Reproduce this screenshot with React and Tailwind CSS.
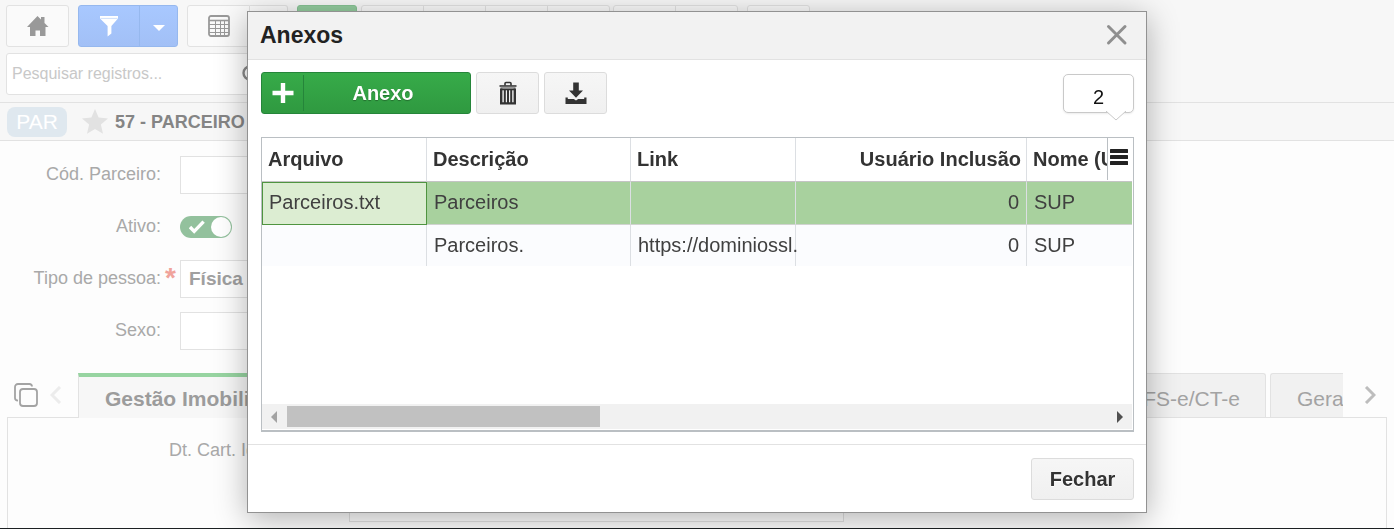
import React, { useState } from 'react';

const HomeIcon = () => (
  <svg viewBox="0 0 22 22" className="w-[22px] h-[22px]" fill="#999">
    <path d="M0 12 L10.5 1 L14 4.6 V2 H17.5 V8 L21.5 12 H18.5 V21 H13 V15.5 H8.5 V21 H3 V12 Z" />
  </svg>
);

const FunnelIcon = () => (
  <svg viewBox="0 0 20 22" className="w-5 h-[22px]" fill="#fff">
    <path d="M1 1 H19 V3.4 L12.4 11 V18.5 L8.6 21.5 V11 L1 3.4 Z" />
    <path d="M1.5 3.4 H18.5" stroke="#cfe0fb" strokeWidth="1" />
  </svg>
);

const GridIcon = () => (
  <svg viewBox="0 0 22 22" className="w-[22px] h-[22px]" fill="none" stroke="#999">
    <rect x="1" y="1" width="20" height="20" rx="2" strokeWidth="1.8" />
    <path d="M1 5.5 H21" strokeWidth="1.6" />
    <path d="M1 9.5 H21 M1 13.5 H21 M1 17.5 H21 M7.5 5.5 V21 M12.5 5.5 V21 M16.5 5.5 V21" strokeWidth="1" />
  </svg>
);

const SearchIcon = () => (
  <svg viewBox="0 0 20 20" className="w-5 h-5" fill="none" stroke="#8a8a8a" strokeWidth="2.4">
    <circle cx="8" cy="9" r="6.5" />
    <path d="M13 14 L18 19" />
  </svg>
);

const StarIcon = () => (
  <svg viewBox="0 0 26 25" className="w-[26px] h-[25px]" fill="#e2e2e2">
    <path d="M13 0 L16.6 8.6 L26 9.4 L18.9 15.5 L21 24.8 L13 19.9 L5 24.8 L7.1 15.5 L0 9.4 L9.4 8.6 Z" />
  </svg>
);

const CopyIcon = () => (
  <svg viewBox="0 0 24 24" className="w-6 h-6" fill="none" stroke="#a3a3a3" strokeWidth="1.8">
    <rect x="6" y="6" width="17" height="17" rx="3" />
    <path d="M18 3.5 C18 2 17 1 15.5 1 H4 C2.2 1 1 2.2 1 4 V15 C1 16.6 2 17.4 4 17.6" />
  </svg>
);

const ChevronIcon = ({ left, color }) => (
  <svg viewBox="0 0 12 18" className="w-3 h-[18px]" fill="none" stroke={color} strokeWidth="3">
    <path d={left ? 'M10 1 L2 9 L10 17' : 'M2 1 L10 9 L2 17'} />
  </svg>
);

const TrashIcon = () => (
  <svg viewBox="0 0 18 24" className="w-[18px] h-6" fill="none" stroke="#333">
    <path d="M6 4.5 V2.4 Q6 1.5 7 1.5 H11 Q12 1.5 12 2.4 V4.5" strokeWidth="1.6" />
    <path d="M0.5 5 H17.5" strokeWidth="1.6" />
    <path d="M1.5 6.8 H16.5" stroke="#999" strokeWidth="2" />
    <path d="M2.2 7.5 V22.4 H15.8 V7.5" strokeWidth="2.4" />
    <path d="M2 8.5 H16" strokeWidth="1.6" />
    <path d="M5.8 8 V22 M9 8 V22 M12.2 8 V22" strokeWidth="2" />
  </svg>
);

const DownloadIcon = () => (
  <svg viewBox="0 0 22 22" className="w-[22px] h-[22px]" fill="#333">
    <path d="M8.2 0.5 H13.8 V8.5 H18 L11 15.8 L4 8.5 H8.2 Z" />
    <path d="M0.5 15.5 H2.8 V17 H8.8 L11 18.4 L13.2 17 H19.2 V15.5 H21.5 V22 H0.5 Z" />
  </svg>
);

const columns = [
  { key: 'arquivo', label: 'Arquivo', width: 'w-[165px]' },
  { key: 'descricao', label: 'Descrição', width: 'w-[204px]' },
  { key: 'link', label: 'Link', width: 'w-[165px]' },
  { key: 'usuario', label: 'Usuário Inclusão', width: 'w-[231px]', right: true },
  { key: 'nome', label: 'Nome (U', width: '' },
];

const rows = [
  { arquivo: 'Parceiros.txt', descricao: 'Parceiros', link: '', usuario: '0', nome: 'SUP' },
  { arquivo: '', descricao: 'Parceiros.', link: 'https://dominiossl.', usuario: '0', nome: 'SUP' },
];

const toolButton = 'h-[42px] w-[63px] flex items-center justify-center border border-[#e2e2e2] bg-[#fafafa]';

const ButtonGroup = ({ count }) => (
  <div className="flex rounded-[3px] border border-[#e2e2e2] bg-[#fafafa] overflow-hidden">
    {Array.from({ length: count }).map((_, i) => (
      <button
        key={i}
        aria-label={`Ação ${i + 1}`}
        className={`h-10 ${i > 0 ? 'w-[62px] border-l border-[#e2e2e2]' : 'w-[61px]'}`}
      />
    ))}
  </div>
);

const Toolbar = () => (
  <header className="bg-[#f7f7f7] border-b border-[#e2e2e2] px-1.5 pt-[5px] pb-[7px]">
    <div className="flex">
      <button aria-label="Início" className={`${toolButton} rounded-[3px]`}>
        <HomeIcon />
      </button>
      <div className="ml-[9px] flex rounded-[3px] border border-[#96b8ee] bg-linear-to-b from-[#a8c8ff] to-[#a2c0f6] overflow-hidden">
        <button aria-label="Filtro" className="w-[60px] h-10 flex items-center justify-center">
          <FunnelIcon />
        </button>
        <button aria-label="Opções de filtro" className="w-[38px] h-10 flex items-center justify-center border-l border-[#96b8ee]">
          <svg viewBox="0 0 12 6" className="w-3 h-1.5 mt-1" fill="#fff">
            <path d="M0 0 H12 L6 6 Z" />
          </svg>
        </button>
      </div>
      <div className="ml-[9px] flex">
        <button aria-label="Modo grade" className={`${toolButton} rounded-l-[3px]`}>
          <GridIcon />
        </button>
        <button aria-label="Mais modos" className="h-[42px] w-[38px] border border-l-0 border-[#e2e2e2] rounded-r-[3px] bg-[#fafafa]" />
      </div>
      <button aria-label="Novo" className="ml-[9px] mr-1 h-[42px] w-[60px] rounded-[3px] border border-[#87c294] bg-[#93cc9e]" />
      <ButtonGroup count={4} />
      <div className="ml-[3px] flex">
        <ButtonGroup count={2} />
      </div>
      <div className="ml-[9px] flex">
        <ButtonGroup count={1} />
      </div>
    </div>
    <div className="mt-1.5 flex w-[262px] h-[42px] items-center rounded-[3px] border border-[#e2e2e2] bg-white pl-[5px]">
      <input
        type="text"
        aria-label="Pesquisar registros"
        placeholder="Pesquisar registros..."
        className="w-[230px] text-base placeholder:text-[#c8c8c8] outline-none"
      />
      <SearchIcon />
    </div>
  </header>
);

const Field = ({ id, label, required, children }) => (
  <div className="flex h-[38px] items-center">
    <label htmlFor={id} className="w-[161px] pb-0.5 text-right text-lg leading-6 text-[#a9a9a9]">
      {label}
    </label>
    <span className="w-[19px] pl-1 text-[28px] leading-9 h-[38px] font-bold text-[#f0a39b]">{required ? '*' : ''}</span>
    {children}
  </div>
);

const fieldInput = 'h-[38px] w-[300px] border border-[#e2e2e2] bg-white px-2 text-[19px] font-bold text-[#a0a0a0] outline-none';

const PartnerForm = () => {
  const [active, setActive] = useState(true);

  return (
    <section className="flex flex-col gap-3.5 pt-[15px] pb-[23px]">
      <Field id="codigo" label="Cód. Parceiro:">
        <input id="codigo" type="text" className={fieldInput} />
      </Field>
      <Field id="ativo" label="Ativo:">
        <label className={`flex w-[52px] h-[22px] items-center rounded-full p-px ${active ? 'bg-[#93c19d]' : 'bg-[#d0d0d0]'}`}>
          <input
            id="ativo"
            type="checkbox"
            className="sr-only"
            checked={active}
            onChange={(e) => setActive(e.target.checked)}
          />
          <svg viewBox="0 0 16 14" className="ml-2 w-4 h-3.5" fill="none" stroke="#fff" strokeWidth="3.4">
            <path d="M1 7 L5.2 11.4 L14.6 1.6" />
          </svg>
          <span className="ml-auto w-5 h-5 rounded-full bg-white" />
        </label>
      </Field>
      <Field id="tipo" label="Tipo de pessoa:" required>
        <input id="tipo" type="text" defaultValue="Física" className={fieldInput} />
      </Field>
      <Field id="sexo" label="Sexo:">
        <input id="sexo" type="text" className={fieldInput} />
      </Field>
    </section>
  );
};

const DetailTabs = () => (
  <div className="flex flex-col flex-1">
    <div className="flex h-[45px] px-[7px]">
      <div className="flex w-[71px] items-center gap-3 border-b border-[#e2e2e2] pl-[7px]">
        <CopyIcon />
        <ChevronIcon left color="#ececec" />
      </div>
      <button className="w-[220px] shrink-0 border-l border-t-4 border-l-[#e2e2e2] border-t-[#97d4a1] bg-[#f7f7f7] pl-[26px] pt-0.5 text-left text-[21px] font-bold text-[#9c9c9c] whitespace-nowrap">
        Gestão Imobiliária
      </button>
      <div className="flex flex-1 justify-end gap-1 border-b border-[#e2e2e2]">
        <button className="rounded-t-[3px] border border-b-0 border-[#e2e2e2] bg-[#f1f1f1] px-[25px] pt-1.5 text-[21px] text-[#a3a3a3]">
          NFS-e/CT-e
        </button>
        <button className="w-[73px] overflow-hidden rounded-tl-[3px] border border-b-0 border-r-0 border-[#e2e2e2] bg-[#f1f1f1] pl-[26px] pt-1.5 text-left text-[21px] text-[#a3a3a3]">
          Geral
        </button>
      </div>
      <div className="flex w-[44px] items-center border-b border-[#e2e2e2] pl-[21px]">
        <ChevronIcon color="#bdbdbd" />
      </div>
    </div>
    <div className="mx-[7px] flex flex-1 flex-col gap-3.5 border-x border-[#e2e2e2] pt-3.5 pb-[5px]">
      <div className="flex h-[38px] items-center">
        <label htmlFor="cartorio" className="w-[322px] pb-0.5 pl-[161px] text-lg text-[#a9a9a9] whitespace-nowrap">
          Dt. Cart. Ident.:
        </label>
        <input id="cartorio" type="text" className={`${fieldInput} ml-[19px]`} />
      </div>
      <div className="flex pl-[341px]">
        <input type="text" aria-label="Cartório" className="h-[38px] w-[495px] border border-[#e2e2e2] bg-white outline-none" />
      </div>
    </div>
    <footer className="h-px bg-[#1c2123]" />
  </div>
);

const AttachmentGrid = () => {
  const [selected, setSelected] = useState(0);

  return (
    <div className="relative mt-[23px] flex h-[295px] flex-col border border-b-2 border-[#babfc3] pr-px text-xl text-[#404040]">
      <table className="w-full table-fixed border-separate border-spacing-0">
        <thead>
          <tr>
            {columns.map((col, i) => (
              <th
                key={col.key}
                className={`h-11 border-b border-b-[#c4c4c4] pb-0.5 pl-1.5 pr-[5px] font-bold leading-6 text-[#333] whitespace-nowrap ${col.width} ${
                  col.right ? 'text-right' : 'text-left'
                } ${i < columns.length - 1 ? 'border-r border-r-[#dcdfe3]' : ''}`}
              >
                {col.label}
              </th>
            ))}
          </tr>
        </thead>
        <tbody>
          {rows.map((row, r) => (
            <tr key={r} onClick={() => setSelected(r)} className={r === selected ? 'bg-[#a8d19e]' : 'bg-[#fbfcfe]'}>
              {columns.map((col, i) => (
                <td
                  key={col.key}
                  className={`px-[7px] pb-0.5 leading-6 whitespace-nowrap ${
                    r < rows.length - 1 ? 'h-[43px] border-b border-b-[#d0d3d0]' : 'h-[41px]'
                  } ${col.right ? 'text-right' : 'text-left'} ${
                    i < columns.length - 1 ? 'border-r border-r-[#dcdfe3]' : ''
                  } ${r === selected && i === 0 ? 'bg-[#dcedd2] outline outline-[#4f9440] -outline-offset-1' : ''}`}
                >
                  {row[col.key]}
                </td>
              ))}
            </tr>
          ))}
        </tbody>
      </table>

      {/* Column menu sits over the last header */}
      <button
        aria-label="Configurar colunas"
        className="absolute right-0 top-0 flex h-[42px] w-[26px] items-start justify-start border-l border-[#babfc3] bg-white pl-0.5 pt-[11px]"
      >
        <svg viewBox="0 0 18 16" className="w-[18px] h-4" fill="#222">
          <rect width="18" height="4" rx="0.5" />
          <rect y="6" width="18" height="4" rx="0.5" />
          <rect y="12" width="18" height="4" rx="0.5" />
        </svg>
      </button>

      {/* Horizontal scrollbar */}
      <div className="mt-auto mb-px flex h-[25px] items-center bg-[#f1f1f1]">
        <svg viewBox="0 0 25 12" className="w-[25px] h-3" fill="#a3a3a3">
          <path d="M15 0 V12 L9 6 Z" />
        </svg>
        <div className="h-[21px] w-[313px] bg-[#c1c1c1]" />
        <svg viewBox="0 0 25 12" className="ml-auto w-[25px] h-3" fill="#505050">
          <path d="M10 0 V12 L16 6 Z" />
        </svg>
      </div>
    </div>
  );
};

const grayButton = 'h-[42px] flex items-center justify-center rounded-[3px] border border-[#dcdcdc] bg-linear-to-b from-[#f6f6f6] to-[#f0f0f0]';

const AttachmentsDialog = () => (
  <div className="fixed inset-0 flex items-start justify-center pt-[11px]">
    <div
      role="dialog"
      aria-labelledby="anexos-title"
      className="w-[900px] border border-[#929292] bg-white shadow-[0_6px_30px_rgba(0,0,0,0.3)]"
    >
      <div className="flex h-12 items-center justify-between border-b border-[#e2e2e2] bg-[#f2f2f2] pl-3 pr-[18px] pb-0.5">
        <h2 id="anexos-title" className="text-[23px] leading-7 font-bold text-[#222]">
          Anexos
        </h2>
        <button aria-label="Fechar janela">
          <svg viewBox="0 0 22 22" className="w-[22px] h-[22px]" fill="none" stroke="#8f8f8f" strokeWidth="3" strokeLinecap="round">
            <path d="M2.5 2.5 L19 19 M19 2.5 L2.5 19" />
          </svg>
        </button>
      </div>

      <div className="px-3 pt-3 pb-3 pl-[13px]">
        <div className="flex items-start">
          <button className="flex h-[42px] w-[210px] items-center rounded-[3px] border border-[#25853a] bg-linear-to-b from-[#37ab49] to-[#2f9940] text-xl font-bold text-white text-shadow-[0_1px_1px_rgba(0,0,0,0.3)]">
            <span className="flex h-9 w-[42px] items-center justify-center border-r border-[#25853a]">
              <svg viewBox="0 0 22 22" className="w-[22px] h-[22px]" fill="#fff">
                <path d="M8.8 1 H13.2 V8.8 H21.5 V13.2 H13.2 V21 H8.8 V13.2 H0.5 V8.8 H8.8 Z" />
              </svg>
            </span>
            <span className="flex-1 pr-2 text-center">Anexo</span>
          </button>
          <button aria-label="Excluir" className={`${grayButton} ml-[5px] w-[63px]`}>
            <TrashIcon />
          </button>
          <button aria-label="Baixar" className={`${grayButton} ml-[5px] w-[63px]`}>
            <DownloadIcon />
          </button>
          <div className="relative ml-auto mt-0.5 flex h-[39px] w-[71px] items-center justify-center rounded-[5px] border border-[#c9c9c9] bg-white pt-1.5 text-xl text-[#111] shadow-[0_1px_2px_rgba(0,0,0,0.08)]">
            2
            <svg viewBox="0 0 20 10" className="absolute right-[7px] -bottom-[9px] w-5 h-2.5">
              <path d="M0 0 L10 9 L20 0" fill="#fff" stroke="#c9c9c9" />
            </svg>
          </div>
        </div>
        <AttachmentGrid />
      </div>

      <div className="flex h-[68px] items-center justify-end border-t border-[#e2e2e2] pr-3">
        <button className={`${grayButton} w-[103px] text-xl font-bold text-[#333] text-shadow-[0_1px_0_#fff]`}>Fechar</button>
      </div>
    </div>
  </div>
);

export default function App() {
  return (
    <div className="flex min-h-screen flex-col bg-[#fdfdfd] font-['Liberation_Sans',Arial,sans-serif]">
      <Toolbar />
      <div className="flex h-[38px] items-center border-b border-[#e2e2e2] bg-[#f7f7f7] pl-[7px]">
        <span className="flex h-[30px] w-[60px] items-center justify-center rounded-lg bg-[#dfe8ef] text-[21px] leading-6 text-white">
          PAR
        </span>
        <span className="ml-[15px]">
          <StarIcon />
        </span>
        <h1 className="ml-[7px] text-lg font-bold text-[#858585]">57 - PARCEIRO</h1>
      </div>
      <PartnerForm />
      <DetailTabs />
      <AttachmentsDialog />
    </div>
  );
}
